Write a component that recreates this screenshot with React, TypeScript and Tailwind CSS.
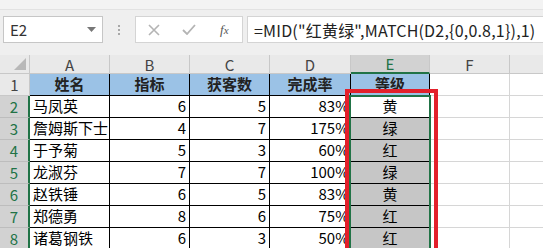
import React from "react";

const FONT = { fontFamily: '"Noto Sans CJK SC", "Noto Sans", "Liberation Sans", sans-serif' };

const widths = [30, 80, 80, 80, 81, 79, 80, 40];
const rows: [string, number, number, string, string][] = [
  ["马凤英", 6, 5, "83%", "黄"],
  ["詹姆斯下士", 4, 7, "175%", "绿"],
  ["于予菊", 5, 3, "60%", "红"],
  ["龙淑芬", 7, 7, "100%", "绿"],
  ["赵铁锤", 6, 5, "83%", "黄"],
  ["郑德勇", 8, 6, "75%", "红"],
  ["诸葛钢铁", 6, 3, "50%", "红"],
];

function ColHeader() {
  const letters = ["A", "B", "C", "D", "E", "F", ""];
  return (
    <div className="flex h-[19px]">
      <div
        className="relative shrink-0 border-r border-b border-[#c8c8c8] bg-[#e9e9e9]"
        style={{ width: widths[0] }}
      >
        <svg className="absolute right-[3px] bottom-[3px]" width="12" height="12" viewBox="0 0 12 12">
          <polygon points="12,0 12,12 0,12" fill="#b8b8b8" />
        </svg>
      </div>
      {letters.map((l, i) => (
        <div
          key={i}
          className={
            "shrink-0 flex items-center justify-center text-[15px] leading-none " +
            (l === "E"
              ? "bg-[#d2d2d2] text-[#217346] border-r border-[#c8c8c8] border-b-2 border-b-[#217346]"
              : "bg-[#e9e9e9] text-[#444] border-r border-b border-[#c8c8c8]")
          }
          style={{ width: widths[i + 1] }}
        >
          {l}
        </div>
      ))}
    </div>
  );
}

function RowHeader({ n, sel }: { n: number; sel: boolean }) {
  return (
    <div
      className={
        "shrink-0 flex items-center justify-center text-[15px] leading-none border-b " +
        (sel
          ? "bg-[#d2d2d2] text-[#217346] border-b-[#bdbdbd] border-r-2 border-r-[#217346]"
          : "bg-[#e9e9e9] text-[#444] border-b-[#c8c8c8] border-r border-r-[#c8c8c8]")
      }
      style={{ width: widths[0] }}
    >
      {n}
    </div>
  );
}

function EmptyCells() {
  return (
    <>
      <div className="shrink-0 border-r border-b border-[#d6d6d6]" style={{ width: widths[6] }} />
      <div className="shrink-0 border-r border-b border-[#d6d6d6]" style={{ width: widths[7] }} />
    </>
  );
}

export default function App() {
  return (
    <div className="relative w-[543px] h-[248px] overflow-hidden bg-white text-black" style={FONT}>
      {/* ribbon remnant */}
      <div className="h-[10px] bg-[#f3f3f3] border-b border-[#e2e2e2]" />
      {/* formula bar */}
      <div className="h-[45px] bg-[#efefef] flex items-start pt-[6px]">
        <div className="ml-[3px] w-[100px] h-[27px] bg-white border border-[#c6c6c6] flex items-center justify-between pl-[6px] pr-[6px]">
          <span className="text-[15px] text-[#333] leading-none">E2</span>
          <svg width="9" height="5" viewBox="0 0 9 5">
            <polygon points="0,0 9,0 4.5,5" fill="#777" />
          </svg>
        </div>
        <div className="w-[32px] h-[27px] flex flex-col items-center justify-center gap-[2px]">
          <div className="w-[2px] h-[2px] bg-[#a8a8a8]" />
          <div className="w-[2px] h-[2px] bg-[#a8a8a8]" />
          <div className="w-[2px] h-[2px] bg-[#a8a8a8]" />
        </div>
        <div className="w-[108px] h-[27px] bg-white border border-[#d4d4d4] flex items-center">
          <div className="w-[36px] flex justify-center">
            <svg width="12" height="12" viewBox="0 0 12 12">
              <path d="M1 1L11 11M11 1L1 11" stroke="#b4b4b4" strokeWidth="1.6" />
            </svg>
          </div>
          <div className="w-[36px] flex justify-center">
            <svg width="14" height="11" viewBox="0 0 14 11">
              <path d="M1 6L5 10L13 1" stroke="#b4b4b4" strokeWidth="1.8" fill="none" />
            </svg>
          </div>
          <div className="w-[36px] flex justify-center">
            <span className="text-[13px] italic text-[#555]" style={{ fontFamily: '"Liberation Serif", serif' }}>
              f<span className="text-[11px]">x</span>
            </span>
          </div>
        </div>
        <div className="ml-[4px] flex-1 h-[27px] bg-white border border-[#d4d4d4] border-r-0 flex items-center pl-[6px] overflow-hidden whitespace-nowrap">
          <span className="text-[16px] leading-none text-[#222] tracking-[0.2px]">=MID("红黄绿",MATCH(D2,{"{"}0,0.8,1{"}"}),1)</span>
        </div>
      </div>
      <ColHeader />
      {/* row 1 */}
      <div className="flex h-[22px]">
        <RowHeader n={1} sel={false} />
        {["姓名", "指标", "获客数", "完成率", "等级"].map((t, i) => (
          <div
            key={i}
            className="shrink-0 flex items-center justify-center bg-[#9bc2e6] border-r border-b border-black font-bold text-[15px] text-[#222]"
            style={{ width: widths[i + 1] }}
          >
            {t}
          </div>
        ))}
        <EmptyCells />
      </div>
      {rows.map((r, idx) => (
        <div key={idx} className="flex h-[22px]">
          <RowHeader n={idx + 2} sel={true} />
          <div
            className="shrink-0 flex items-center pl-[3px] border-r border-b border-black text-[15px] whitespace-nowrap"
            style={{ width: widths[1] }}
          >
            {r[0]}
          </div>
          <div
            className="shrink-0 flex items-center justify-end pr-[3px] border-r border-b border-black text-[15px]"
            style={{ width: widths[2] }}
          >
            {r[1]}
          </div>
          <div
            className="shrink-0 flex items-center justify-end pr-[3px] border-r border-b border-black text-[15px]"
            style={{ width: widths[3] }}
          >
            {r[2]}
          </div>
          <div
            className="shrink-0 flex items-center justify-end pr-[1px] border-r border-b border-black text-[15px]"
            style={{ width: widths[4] }}
          >
            {r[3]}
          </div>
          <div
            className={
              "shrink-0 flex items-center justify-center border-r border-b border-black text-[15px] " +
              (idx === 0 ? "bg-white" : "bg-[#c6c6c6]")
            }
            style={{ width: widths[5] }}
          >
            {r[4]}
          </div>
          <EmptyCells />
        </div>
      ))}
      {/* selection border */}
      <div className="absolute left-[349px] top-[95px] w-[82px] h-[200px] border-2 border-[#217346]" />
      {/* red highlight */}
      <div className="absolute left-[345px] top-[89px] w-[93px] h-[220px] border-4 border-[#e3202b]" />
    </div>
  );
}
